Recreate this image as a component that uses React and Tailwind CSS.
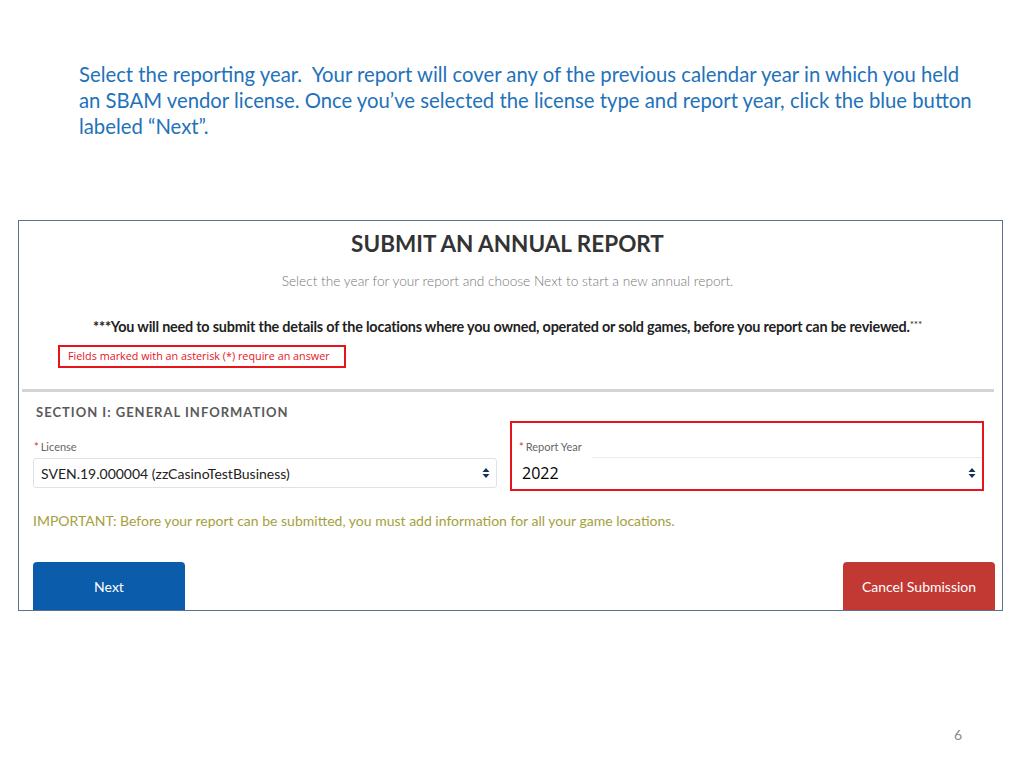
import React from "react";

const lato = { fontFamily: "Lato, 'Open Sans', sans-serif" };

function SortArrows() {
  return (
    <svg width="8" height="12" viewBox="0 0 8 12" className="shrink-0">
      <path d="M4 1 L7.5 5 L0.5 5 Z" fill="#16325c" />
      <path d="M4 11 L7.5 7 L0.5 7 Z" fill="#16325c" />
    </svg>
  );
}

export default function App() {
  return (
    <div className="relative w-[1024px] h-[768px] bg-white overflow-hidden">
      {/* slide intro text */}
      <div
        className="pt-[61px] pl-[79px] text-[20.3px] leading-[26px] text-[#2272b9] whitespace-nowrap"
        style={lato}
      >
        Select the reporting year.&nbsp; Your report will cover any of the previous calendar year in which you held
        <br />
        an SBAM vendor license. Once you’ve selected the license type and report year, click the blue button
        <br />
        labeled “Next”.
      </div>

      {/* screenshot of the form */}
      <div
        className="mt-[81px] ml-[18px] w-[985px] h-[391px] border border-[#5f6f92] flex flex-col"
        style={lato}
      >
        <div className="pt-[10px] pr-[6px] text-center text-[22.5px] leading-[26px] font-bold text-[#333]">
          SUBMIT AN ANNUAL REPORT
        </div>
        <div className="mt-[14px] pr-[6px] text-center text-[13.7px] leading-[20px] font-light text-[#777]">
          Select the year for your report and choose Next to start a new annual report.
        </div>
        <div className="mt-[26px] h-[20px] pr-[6px] text-center text-[14.4px] leading-[20px] font-bold text-[#222] tracking-[-0.2px]">
          ***You will need to submit the details of the locations where you owned, operated or sold games, before you report can be reviewed.
          <span className="relative -top-[4px] text-[10px] leading-[0] font-normal">***</span>
        </div>
        <div className="mt-[8px] ml-[39px] w-[288px] h-[23px] border-2 border-[#e8141c] flex items-center pl-[8px]">
          <span className="text-[10.8px] text-[#e8141c]" style={{ fontFamily: "'Open Sans', sans-serif" }}>
            Fields marked with an asterisk (*) require an answer
          </span>
        </div>
        <div className="mt-[21px] ml-[3px] mr-[8px] h-[3px] bg-[#d4d4d4]" />

        <div className="mt-[12px] ml-[17px] text-[13px] leading-[16px] font-bold tracking-[1px] text-[#5a5a5a]">
          SECTION I: GENERAL INFORMATION
        </div>

        <div className="mt-[1px] flex items-start">
          <div className="ml-[14px] w-[464px] pt-[19px]">
            <div className="text-[11px] leading-[14px] text-[#666] pl-[1px]">
              <span className="text-[#c23934] mr-[2px]">*</span>License
            </div>
            <div className="mt-[4px] h-[30px] border border-[#e2e2e2] rounded-[3px] flex items-center justify-between pl-[7px] pr-[6px]">
              <span className="text-[14px] text-[#222]">SVEN.19.000004 (zzCasinoTestBusiness)</span>
              <SortArrows />
            </div>
          </div>

          <div className="ml-[13px] w-[474px] h-[70px] border-2 border-[#e8141c] pt-[17px]">
            <div className="pl-[7px] text-[11px] leading-[14px] text-[#666]">
              <span className="text-[#c23934] mr-[2px]">*</span>Report Year
            </div>
            <div className="mt-[3px] h-[31px] flex items-stretch">
              <div
                className="w-[80px] pl-[10px] flex items-center text-[16px] text-black"
                style={{ fontFamily: "'Open Sans', sans-serif" }}
              >
                2022
              </div>
              <div className="flex-1 border-t border-[#ececec] flex items-center justify-end pr-[6px]">
                <SortArrows />
              </div>
            </div>
          </div>
        </div>

        <div className="mt-[21px] ml-[14px] text-[14px] leading-[18px] text-[#a3a13c]">
          IMPORTANT: Before your report can be submitted, you must add information for all your game locations.
        </div>

        <div className="mt-auto flex justify-between pl-[14px] pr-[7px]">
          <button className="w-[152px] h-[48px] rounded-t-[4px] bg-[#0b5cab] text-white text-[14px]">
            Next
          </button>
          <button className="w-[152px] h-[48px] rounded-t-[4px] bg-[#c23934] text-white text-[14px]">
            Cancel Submission
          </button>
        </div>
      </div>

      <div
        className="absolute left-[954px] top-[724px] text-[14px] text-[#8a8a8a]"
        style={lato}
      >
        6
      </div>
    </div>
  );
}
